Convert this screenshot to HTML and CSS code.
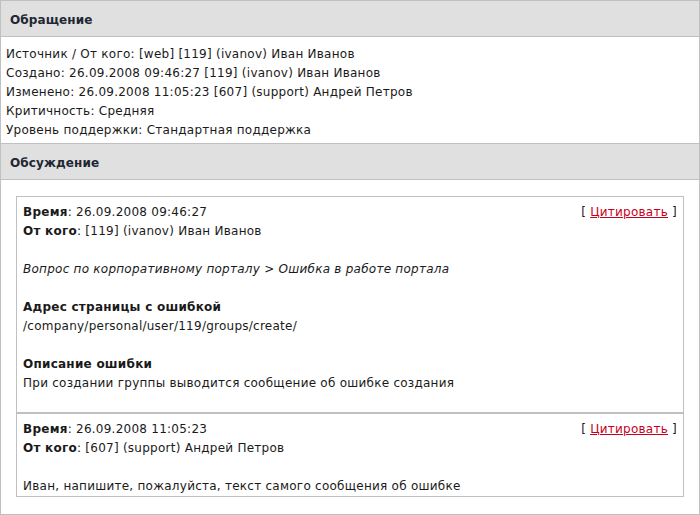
FILE: index.html
```html
<!DOCTYPE html>
<html>
<head>
<meta charset="utf-8">
<link rel="stylesheet" href="styles.css">
</head>
<body>
<div class="page">
  <div class="head head-first">Обращение</div>
  <div class="info">
    <div class="line">Источник / От кого: [web] [119] (ivanov) Иван Иванов</div>
    <div class="line">Создано: 26.09.2008 09:46:27 [119] (ivanov) Иван Иванов</div>
    <div class="line">Изменено: 26.09.2008 11:05:23 [607] (support) Андрей Петров</div>
    <div class="line">Критичность: Средняя</div>
    <div class="line">Уровень поддержки: Стандартная поддержка</div>
  </div>
  <div class="head">Обсуждение</div>
  <div class="discussion">
    <div class="messages">
      <div class="msg msg-first">
        <div class="quote">[ <a href="#">Цитировать</a> ]</div>
        <div class="line"><b>Время</b>: 26.09.2008 09:46:27</div>
        <div class="line"><b>От кого</b>: [119] (ivanov) Иван Иванов</div>
        <div class="line">&nbsp;</div>
        <div class="line"><i>Вопрос по корпоративному порталу &gt; Ошибка в работе портала</i></div>
        <div class="line">&nbsp;</div>
        <div class="line"><b>Адрес страницы с ошибкой</b></div>
        <div class="line">/company/personal/user/119/groups/create/</div>
        <div class="line">&nbsp;</div>
        <div class="line"><b>Описание ошибки</b></div>
        <div class="line">При создании группы выводится сообщение об ошибке создания</div>
      </div>
      <div class="msg msg-last">
        <div class="quote">[ <a href="#">Цитировать</a> ]</div>
        <div class="line"><b>Время</b>: 26.09.2008 11:05:23</div>
        <div class="line"><b>От кого</b>: [607] (support) Андрей Петров</div>
        <div class="line">&nbsp;</div>
        <div class="line">Иван, напишите, пожалуйста, текст самого сообщения об ошибке</div>
      </div>
    </div>
  </div>
</div>
</body>
</html>
```

FILE: styles.css
```css
html, body {
  margin: 0;
  padding: 0;
  background: #fff;
}
body {
  font-family: "DejaVu Sans", Verdana, sans-serif;
  font-size: 12px;
  letter-spacing: 0.25px;
  color: #1a1a1a;
}
.page {
  width: 700px;
  height: 515px;
  box-sizing: border-box;
  border: 1px solid #c0c0c0;
  overflow: hidden;
}
.head {
  background: #e0e0e0;
  border-top: 1px solid #c0c0c0;
  border-bottom: 1px solid #c0c0c0;
  height: 35px;
  box-sizing: content-box;
  padding-top: 0;
  line-height: 39px;
  padding-left: 9px;
  font-weight: bold;
  letter-spacing: 0.1px;
  color: #1e2733;
  overflow: hidden;
}
.head-first {
  border-top: none;
}
.line {
  line-height: 19px;
  white-space: nowrap;
}
.info {
  padding: 8px 5px 3px 5px;
}
.discussion {
  padding: 16px 15px 15px 15px;
}
.messages {
  border: 1px solid #c0c0c0;
}
.msg {
  position: relative;
  padding: 6px 6px 0 6px;
}
.msg-first {
  padding-bottom: 19px;
  border-bottom: 2px solid #c0c0c0;
}
.msg-last {
  padding-bottom: 0;
}
.quote {
  position: absolute;
  top: 6px;
  right: 6px;
  line-height: 19px;
  color: #1a1a1a;
}
.quote a {
  color: #c8001e;
  text-decoration: underline;
}
b {
  font-weight: bold;
}
```
